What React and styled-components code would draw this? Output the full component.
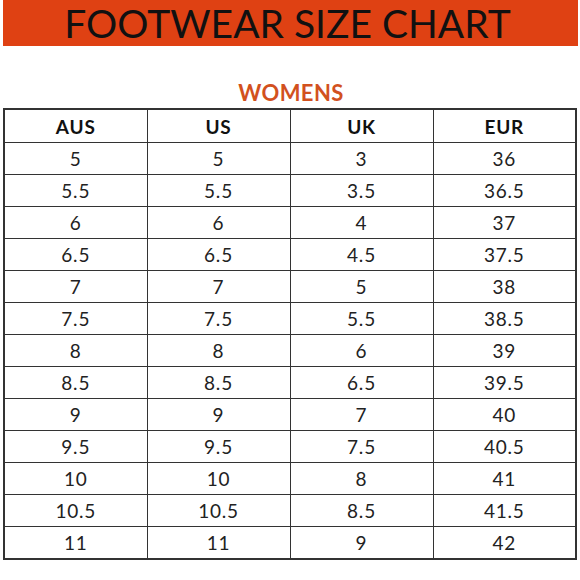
import styled, { createGlobalStyle } from "styled-components";

const GlobalStyle = createGlobalStyle`
	body {
		margin: 0;
		background: #fff;
		font-family: Lato, "Open Sans", sans-serif;
	}
`;

const Page = styled.div`
	width: 580px;
	height: 580px;
	display: flex;
	flex-direction: column;
	align-items: center;
`;

const Banner = styled.header`
	width: 575px;
	height: 46px;
	background: #df4113;
	display: flex;
	align-items: center;
	justify-content: center;
	font-size: 39px;
	color: #111;
	padding-right: 5px;
	box-sizing: border-box;
`;

const Section = styled.h2`
	margin: 31px 0 0;
	height: 31px;
	font-size: 22px;
	font-weight: 700;
	color: #d2511e;
	line-height: 31px;
	letter-spacing: 0.4px;
	padding-left: 2px;
`;

const Table = styled.table`
	width: 574px;
	border-collapse: collapse;
	border: 2px solid #333;
`;

const HeadCell = styled.th`
	height: 32px;
	border: 1.5px solid #333;
	font-size: 19px;
	font-weight: 700;
	letter-spacing: 0.8px;
	color: #111;
	padding: 0;
	width: 25%;
`;

const Cell = styled.td`
	height: 31px;
	border: 1.5px solid #333;
	font-size: 19px;
	letter-spacing: 0.8px;
	color: #222;
	text-align: center;
	padding: 0;
`;

const heads = ["AUS", "US", "UK", "EUR"];

const rows = [
	["5", "5", "3", "36"],
	["5.5", "5.5", "3.5", "36.5"],
	["6", "6", "4", "37"],
	["6.5", "6.5", "4.5", "37.5"],
	["7", "7", "5", "38"],
	["7.5", "7.5", "5.5", "38.5"],
	["8", "8", "6", "39"],
	["8.5", "8.5", "6.5", "39.5"],
	["9", "9", "7", "40"],
	["9.5", "9.5", "7.5", "40.5"],
	["10", "10", "8", "41"],
	["10.5", "10.5", "8.5", "41.5"],
	["11", "11", "9", "42"],
];

const App = () =>
{
	return (
		<>
			<GlobalStyle />
			<Page>
				<Banner>FOOTWEAR SIZE CHART</Banner>
				<Section>WOMENS</Section>
				<Table>
					<thead>
						<tr>
							{heads.map((h) => <HeadCell key={h}>{h}</HeadCell>)}
						</tr>
					</thead>
					<tbody>
						{rows.map((r, i) => (
							<tr key={i}>
								{r.map((v, j) => <Cell key={j}>{v}</Cell>)}
							</tr>
						))}
					</tbody>
				</Table>
			</Page>
		</>
	);
};

export default App;
